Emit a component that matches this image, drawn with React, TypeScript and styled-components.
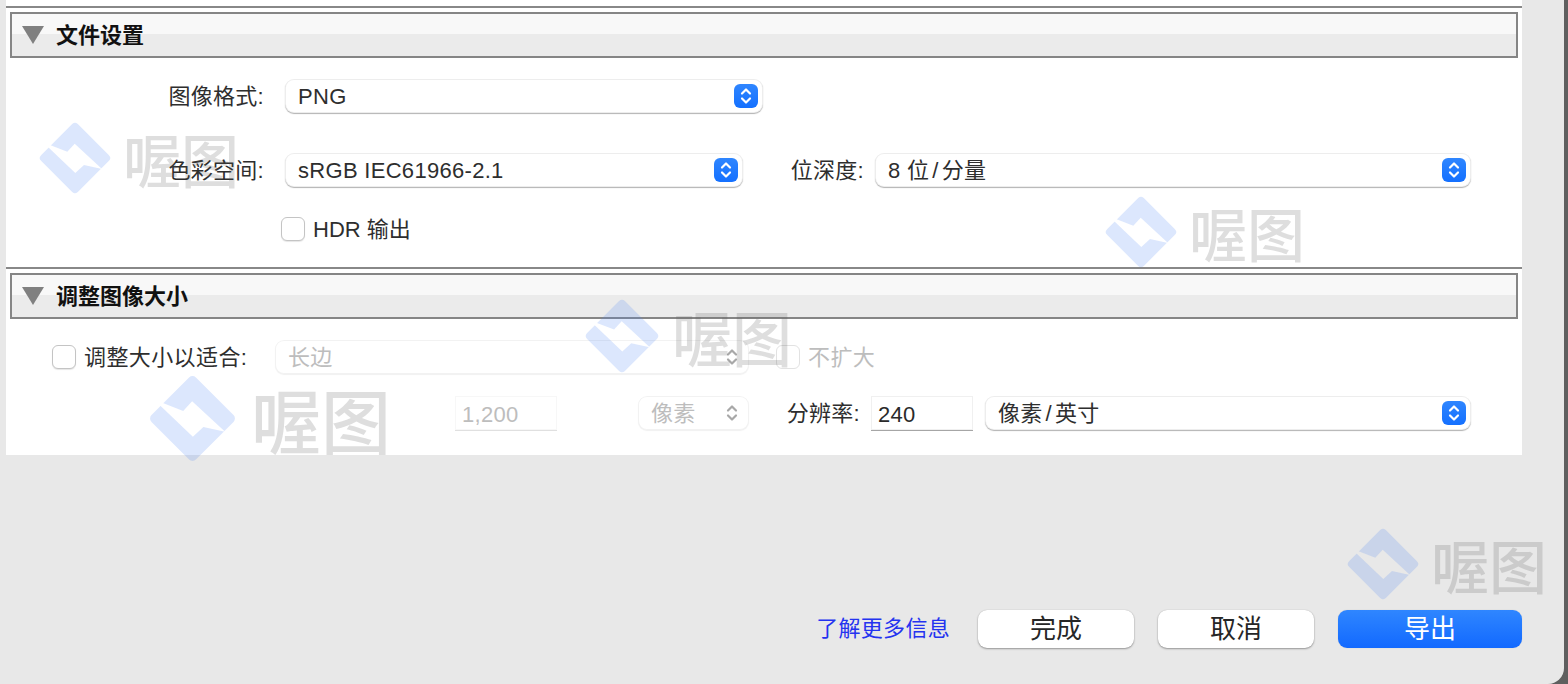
import type { ReactNode } from 'react';
import { useId } from 'react';
import styled, { createGlobalStyle } from 'styled-components';

const UI_FONT = '"Liberation Sans", "Noto Sans CJK SC", sans-serif';

const GlobalStyle = createGlobalStyle`
  html, body {
    margin: 0;
    padding: 0;
    width: 1568px;
    height: 684px;
    overflow: hidden;
    background: #5f5f5f;
    font-family: ${UI_FONT};
  }
`;

const Window = styled.div`
  position: relative;
  width: 1564px;
  height: 684px;
  box-sizing: border-box;
  display: flex;
  flex-direction: column;
  align-items: flex-start;
  background: #e8e8e8;
  border-bottom-right-radius: 16px;
  overflow: hidden;
`;

const Panel = styled.div`
  margin-left: 6px;
  width: 1516px;
  height: 455px;
  background: #ffffff;
  padding-top: 6px;
  box-sizing: border-box;
`;

const Section = styled.section<{ $bottom?: number }>`
  border-top: 2px solid #888888;
  padding: 4px 4px ${({ $bottom }) => $bottom ?? 0}px;
`;

const SectionHeader = styled.div`
  height: 46px;
  box-sizing: border-box;
  border: 2px solid #858585;
  display: flex;
  align-items: center;
  gap: 12px;
  padding-left: 10px;
  background: linear-gradient(#f8f8f8 0, #f8f8f8 20px, #ebebeb 20px, #ebebeb 100%);
`;

const Triangle = styled.span`
  width: 0;
  height: 0;
  border-left: 11px solid transparent;
  border-right: 11px solid transparent;
  border-top: 18px solid #808080;
`;

const SectionTitle = styled.h2`
  margin: 0;
  padding-top: 2px;
  font-size: 22px;
  line-height: 30px;
  font-weight: 700;
  color: #111111;
`;

const Row = styled.div<{ $top: number }>`
  display: flex;
  align-items: center;
  height: 34px;
  margin-top: ${({ $top }) => $top}px;
  margin-left: -4px;
`;

const FieldLabel = styled.label<{ $width: number; $gap?: number; $start?: number }>`
  flex: none;
  width: ${({ $width }) => $width}px;
  margin-left: ${({ $start }) => $start ?? 0}px;
  margin-right: ${({ $gap }) => $gap ?? 0}px;
  padding-top: 2px;
  text-align: right;
  font-size: 22px;
  letter-spacing: 0.3px;
  line-height: 34px;
  white-space: nowrap;
  color: #2e2e2e;
`;

const SelectBox = styled.div<{ $width: number; $start?: number; $disabled?: boolean }>`
  flex: none;
  width: ${({ $width }) => $width}px;
  height: 34px;
  margin-left: ${({ $start }) => $start ?? 0}px;
  box-sizing: border-box;
  display: flex;
  align-items: center;
  justify-content: space-between;
  padding: 0 5px 0 13px;
  border-radius: 9px;
  background: #ffffff;
  box-shadow: ${({ $disabled }) =>
    $disabled
      ? 'inset 0 0 0 1px rgba(0, 0, 0, 0.05), 0 1px 1px rgba(0, 0, 0, 0.06)'
      : 'inset 0 0 0 1px rgba(0, 0, 0, 0.07), 0 1px 1px rgba(0, 0, 0, 0.3)'};
  font-size: 22px;
  line-height: 34px;
  letter-spacing: 0.3px;
  color: ${({ $disabled }) => ($disabled ? '#bdbdbd' : '#2e2e2e')};
`;

const SelectValue = styled.span`
  padding-top: 2px;
`;

const Slash = styled.span`
  margin: 0 3px;
`;

const Stepper = styled.span<{ $disabled?: boolean }>`
  flex: none;
  width: 24px;
  height: 24px;
  border-radius: 6px;
  display: flex;
  align-items: center;
  justify-content: center;
  color: ${({ $disabled }) => ($disabled ? '#a8a8a8' : '#ffffff')};
  background: ${({ $disabled }) => ($disabled ? 'transparent' : 'linear-gradient(#2f86ff, #1470ff)')};
`;

const CheckBox = styled.span<{ $start?: number; $disabled?: boolean }>`
  flex: none;
  width: 24px;
  height: 24px;
  margin-left: ${({ $start }) => $start ?? 0}px;
  margin-right: 8px;
  box-sizing: border-box;
  border-radius: 6px;
  background: #ffffff;
  border: 1px solid ${({ $disabled }) => ($disabled ? '#e2e2e2' : '#c4c4c4')};
  box-shadow: ${({ $disabled }) => ($disabled ? 'none' : '0 1px 1px rgba(0, 0, 0, 0.1)')};
`;

const CheckText = styled.span<{ $width?: number; $disabled?: boolean; $spacing?: number }>`
  flex: none;
  width: ${({ $width }) => ($width ? `${$width}px` : 'auto')};
  padding-top: 2px;
  font-size: 22px;
  line-height: 34px;
  letter-spacing: ${({ $spacing }) => $spacing ?? 0.4}px;
  white-space: nowrap;
  color: ${({ $disabled }) => ($disabled ? '#bdbdbd' : '#2e2e2e')};
`;

const NumberField = styled.div<{ $start: number; $disabled?: boolean }>`
  flex: none;
  width: 102px;
  height: 34px;
  margin-left: ${({ $start }) => $start}px;
  box-sizing: border-box;
  padding: 2px 0 0 7px;
  line-height: 34px;
  font-size: 22px;
  letter-spacing: 0.3px;
  background: #ffffff;
  color: ${({ $disabled }) => ($disabled ? '#bdbdbd' : '#2a2a2a')};
  box-shadow: ${({ $disabled }) =>
    $disabled
      ? 'inset 0 0 0 1px rgba(0, 0, 0, 0.03), 0 1px 0 rgba(0, 0, 0, 0.12)'
      : 'inset 0 0 0 1px rgba(0, 0, 0, 0.06), 0 1px 0 rgba(0, 0, 0, 0.35)'};
`;

const Footer = styled.footer`
  margin-top: 155px;
  align-self: flex-end;
  display: flex;
  align-items: center;
  gap: 24px;
  padding-right: 42px;
`;

const HelpLink = styled.a`
  margin-right: 4px;
  font-size: 22px;
  letter-spacing: 0.3px;
  line-height: 38px;
  color: #2433f0;
`;

const FooterButton = styled.button<{ $primary?: boolean }>`
  width: ${({ $primary }) => ($primary ? 184 : 156)}px;
  height: 38px;
  border: none;
  border-radius: 9px;
  padding: 0;
  font-family: inherit;
  font-size: 26px;
  line-height: 38px;
  color: ${({ $primary }) => ($primary ? '#ffffff' : '#262626')};
  background: ${({ $primary }) => ($primary ? 'linear-gradient(#2f86ff, #1269ff)' : '#ffffff')};
  box-shadow: ${({ $primary }) =>
    $primary ? '0 0 1px rgba(0, 0, 0, 0.2)' : '0 0 1px rgba(0, 0, 0, 0.2), 0 1px 2px rgba(0, 0, 0, 0.35)'};
`;

const WatermarkWrap = styled.div<{ $x: number; $y: number; $size: number }>`
  position: absolute;
  left: ${({ $x }) => $x}px;
  top: ${({ $y }) => $y}px;
  height: ${({ $size }) => $size}px;
  display: flex;
  align-items: center;
  gap: ${({ $size }) => Math.round($size * 0.17)}px;
  pointer-events: none;
`;

const WatermarkText = styled.span<{ $size: number }>`
  font-family: "Noto Sans CJK SC", sans-serif;
  font-weight: 500;
  font-size: ${({ $size }) => Math.round($size * 0.81)}px;
  line-height: 1;
  white-space: nowrap;
  color: rgba(90, 90, 90, 0.2);
`;

const ChevronIcon = () => (
  <svg width="14" height="18" viewBox="0 0 14 18" fill="none" stroke="currentColor" strokeWidth="2.2" strokeLinecap="round" strokeLinejoin="round">
    <path d="M3 6.5 7 2.5l4 4" />
    <path d="M3 11.5l4 4 4-4" />
  </svg>
);

const Select = ({ value, width, start, disabled }: { value: ReactNode; width: number; start?: number; disabled?: boolean }) => (
  <SelectBox $width={width} $start={start} $disabled={disabled}>
    <SelectValue>{value}</SelectValue>
    <Stepper $disabled={disabled}>
      <ChevronIcon />
    </Stepper>
  </SelectBox>
);

const Watermark = ({ x, y, size }: { x: number; y: number; size: number }) => {
  const maskId = useId();
  return (
    <WatermarkWrap $x={x} $y={y} $size={size}>
      <svg width={size} height={size} viewBox="0 0 72 72">
        <mask id={maskId}>
          <rect width="72" height="72" fill="#fff" />
          <polygon points="11,23 28.3,29.7 35.7,21.7 63,47 45,43 36.3,51 9,25" fill="#000" />
        </mask>
        <g mask={`url(#${maskId})`}>
          <rect x="10" y="10" width="52" height="52" rx="4" transform="rotate(45 36 36)" fill="rgba(80, 135, 245, 0.2)" />
        </g>
      </svg>
      <WatermarkText $size={size}>喔图</WatermarkText>
    </WatermarkWrap>
  );
};

const App = () => (
  <>
    <GlobalStyle />
    <Window>
      <Panel>
        <Section $bottom={21}>
          <SectionHeader>
            <Triangle />
            <SectionTitle>文件设置</SectionTitle>
          </SectionHeader>
          <Row $top={21}>
            <FieldLabel $width={258} $gap={21}>图像格式:</FieldLabel>
            <Select value="PNG" width={478} />
          </Row>
          <Row $top={40}>
            <FieldLabel $width={258} $gap={21}>色彩空间:</FieldLabel>
            <Select value="sRGB IEC61966-2.1" width={458} />
            <FieldLabel $width={74} $start={47} $gap={11}>位深度:</FieldLabel>
            <Select value={<>8 位<Slash>/</Slash>分量</>} width={596} />
          </Row>
          <Row $top={25}>
            <CheckBox $start={275} />
            <CheckText $spacing={0}>HDR 输出</CheckText>
          </Row>
        </Section>
        <Section>
          <SectionHeader>
            <Triangle />
            <SectionTitle>调整图像大小</SectionTitle>
          </SectionHeader>
          <Row $top={21}>
            <CheckBox $start={46} />
            <CheckText $width={164}>调整大小以适合:</CheckText>
            <Select value="长边" width={474} start={27} disabled />
            <CheckBox $start={27} $disabled />
            <CheckText $disabled>不扩大</CheckText>
          </Row>
          <Row $top={22}>
            <NumberField $start={449} $disabled>1,200</NumberField>
            <Select value="像素" width={111} start={81} disabled />
            <FieldLabel $width={74} $start={37} $gap={11}>分辨率:</FieldLabel>
            <NumberField $start={0}>240</NumberField>
            <Select value={<>像素<Slash>/</Slash>英寸</>} width={486} start={12} />
          </Row>
        </Section>
      </Panel>
      <Footer>
        <HelpLink>了解更多信息</HelpLink>
        <FooterButton>完成</FooterButton>
        <FooterButton>取消</FooterButton>
        <FooterButton $primary>导出</FooterButton>
      </Footer>
      <Watermark x={39} y={122} size={72} />
      <Watermark x={1105} y={196} size={72} />
      <Watermark x={585} y={299} size={74} />
      <Watermark x={149} y={375} size={87} />
      <Watermark x={1347} y={528} size={72} />
    </Window>
  </>
);

export default App;
